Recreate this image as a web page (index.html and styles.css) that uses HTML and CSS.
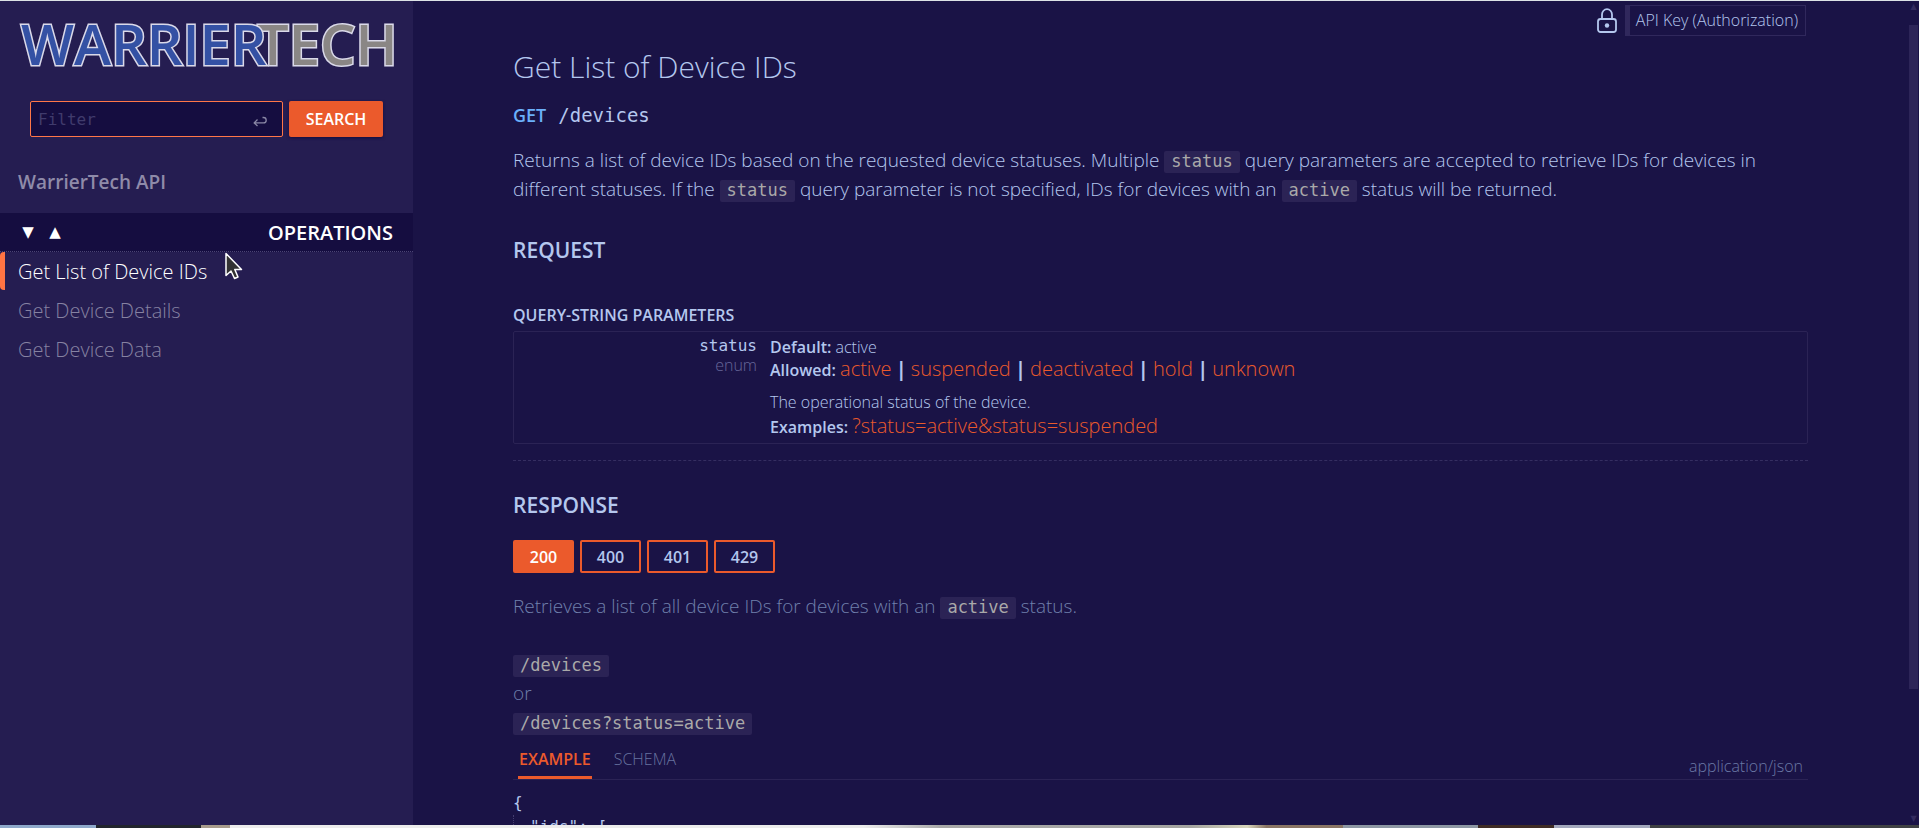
FILE: index.html
```html
<!DOCTYPE html>
<html lang="en">
<head>
<meta charset="utf-8">
<title>WarrierTech API</title>
<link rel="stylesheet" href="styles.css">
</head>
<body>
<div class="app">
  <aside class="sidebar">
    <svg class="logo" viewBox="0 0 378 80" role="img" aria-label="WarrierTech">
      <text class="logo-tech" x="239" y="63">TECH</text>
      <text class="logo-warrier" x="3" y="63">WARRIER</text>
    </svg>
    <form class="search">
      <div class="filter">
        <input class="filter-input" type="text" placeholder="Filter" aria-label="Filter">
        <svg class="filter-enter" viewBox="0 0 14 12" aria-hidden="true">
          <path d="M9.500 2.500h1a2.700 2.700 0 0 1 0 5.400H1.500M4.500 4.500L1.200 7.900L4.500 11" fill="none" stroke="#8a87a5" stroke-width="1.300"/>
        </svg>
      </div>
      <button class="search-button" type="button">SEARCH</button>
    </form>
    <nav class="nav">
      <a class="nav-api" href="#api">WarrierTech API</a>
      <div class="nav-section">
        <div class="nav-toggles">
          <button class="toggle" type="button" aria-label="Expand all">▼</button>
          <button class="toggle" type="button" aria-label="Collapse all">▲</button>
        </div>
        <span>OPERATIONS</span>
      </div>
      <a class="nav-item active" href="#list">Get List of Device IDs</a>
      <a class="nav-item" href="#details">Get Device Details</a>
      <a class="nav-item" href="#data">Get Device Data</a>
    </nav>
    <svg class="cursor" viewBox="0 0 18 28" aria-hidden="true">
      <path d="M1 1.500V23.500L6 19L9.500 26.500L13 25L9.800 17.500H16.500Z" fill="#333" stroke="#fff" stroke-width="1.500" stroke-linejoin="round"/>
    </svg>
  </aside>
  <main class="content">
    <div class="auth">
      <svg class="lock" viewBox="0 0 20 26" aria-hidden="true">
        <path d="M5 11V6.500a5 5.300 0 0 1 10 0V11" fill="none" stroke="#b4c7ee" stroke-width="1.800"/>
        <rect x="1" y="11" width="18" height="13" rx="2.500" fill="none" stroke="#b4c7ee" stroke-width="1.800"/>
        <circle cx="10" cy="17.500" r="2.200" fill="#b4c7ee"/>
      </svg>
      <a class="auth-key" href="#auth">API Key (Authorization)</a>
    </div>
    <h1 class="title">Get List of Device IDs</h1>
    <div class="endpoint"><span class="method">GET</span><span class="path">/devices</span></div>
    <p class="text summary">Returns a list of device IDs based on the requested device statuses. Multiple <code>status</code> query parameters are accepted to retrieve IDs for devices in different statuses. If the <code>status</code> query parameter is not specified, IDs for devices with an <code>active</code> status will be returned.</p>
    <section class="request">
      <h2 class="heading">REQUEST</h2>
      <h3 class="subheading">QUERY-STRING PARAMETERS</h3>
      <div class="params">
        <div class="param-name">
          <div class="name">status</div>
          <div class="type">enum</div>
        </div>
        <div class="param-info">
          <div class="line"><b>Default:</b> active</div>
          <div class="line"><b>Allowed:</b> <a href="#v">active</a> <b class="bar">|</b> <a href="#v">suspended</a> <b class="bar">|</b> <a href="#v">deactivated</a> <b class="bar">|</b> <a href="#v">hold</a> <b class="bar">|</b> <a href="#v">unknown</a></div>
          <div class="line desc">The operational status of the device.</div>
          <div class="line examples"><b>Examples:</b> <a href="#v">?status=active&amp;status=suspended</a></div>
        </div>
      </div>
    </section>
    <section class="response">
      <h2 class="heading">RESPONSE</h2>
      <div class="codes">
        <button class="code-tab selected" type="button">200</button>
        <button class="code-tab" type="button">400</button>
        <button class="code-tab" type="button">401</button>
        <button class="code-tab" type="button">429</button>
      </div>
      <p class="text muted retrieves">Retrieves a list of all device IDs for devices with an <code>active</code> status.</p>
      <p class="text muted"><code>/devices</code><br>or<br><code>/devices?status=active</code></p>
      <div class="tabs">
        <button class="tab selected" type="button">EXAMPLE</button>
        <button class="tab" type="button">SCHEMA</button>
        <span class="mime">application/json</span>
      </div>
      <div class="json">
        <div>{</div>
        <div class="json-body">"ids": [</div>
      </div>
    </section>
  </main>
  <div class="scroll" aria-hidden="true"><span class="arrow">▲</span><div class="thumb"></div><span class="arrow">▼</span></div>
</div>
</body>
</html>
```
FILE: styles.css
```css
* { box-sizing: border-box; }
body {
  margin: 0;
  height: 100vh;
  display: flex;
  flex-direction: column;
  overflow: hidden;
  font-family: "Open Sans", "Noto Sans", sans-serif;
  font-weight: 300;
  color: #b4c7ee;
  background: #1a1346;
}
body::before { content: ""; flex: 0 0 1px; background: #dde3e6; }
body::after {
  content: "";
  flex: 0 0 3px;
  background: linear-gradient(90deg, #8fa9cb 0 5%, #22252d 5% 10.500%, #a89c8c 10.500% 12%, #ececec 12% 45%, #a9a9a9 49%, #a4a4a0 62%, #d8d5bb 65%, #8a7564 66% 70%, #8d97a3 70% 77%, #3f2c25 77% 81%, #a3a8bd 81% 86%, #3f4143 86%);
}
h1, h2, h3, p { margin: 0; }
button, input { font-family: inherit; }
a { text-decoration: none; color: inherit; }
.app { flex: 1; min-height: 0; display: flex; }

.sidebar { position: relative; flex: 0 0 413px; background: #251d51; }
.logo { display: block; width: 378px; height: 80px; margin: 1px 0 0 18px; }
.logo text {
  font-size: 56px;
  font-weight: 600;
  stroke: #dad9e9;
  stroke-width: 3px;
  paint-order: stroke;
}
.logo-warrier { fill: #3451a4; }
.logo-tech { fill: #8a8685; }
.search { display: flex; gap: 6px; margin: 19px 30px 0; }
.filter { position: relative; flex: 1; }
.filter-input {
  width: 100%;
  height: 36px;
  padding: 0 36px 0 7px;
  border: 1px solid #ff7648;
  border-radius: 2px;
  background: #150d40;
  color: #fff;
  font: 16px "DejaVu Sans Mono", monospace;
}
.filter-input::placeholder { color: #403b6c; opacity: 1; }
.filter-enter { position: absolute; right: 16px; top: 14px; width: 14px; height: 12px; }
.search-button {
  width: 94px;
  height: 36px;
  padding: 0;
  border: 0;
  border-radius: 2px;
  background: #eb5a2c;
  color: #fff;
  font-size: 16px;
  font-weight: 600;
  box-shadow: 0 1px 3px #150d40;
}
.nav { margin-top: 32px; }
.nav a { display: block; padding-left: 18px; }
.nav .nav-api { height: 44px; font-size: 19px; line-height: 27px; font-weight: 600; color: #8f8ba9; }
.nav-section {
  display: flex;
  justify-content: space-between;
  align-items: center;
  height: 39px;
  padding: 0 20px;
  background: #150d40;
  border-bottom: 1px dotted #4b4574;
  color: #fff;
  font-size: 20px;
  font-weight: 600;
}
.nav-toggles { display: flex; gap: 11px; }
.toggle { width: 16px; padding: 0; border: 0; background: none; color: #fff; font: 15px "DejaVu Sans", sans-serif; }
.nav-item { height: 39px; font-size: 20px; line-height: 39px; color: #8682a2; }
.nav .nav-item.active { position: relative; color: #fff; }
.nav-item.active::before { content: ""; position: absolute; left: 0; top: 0; width: 5px; height: 38px; background: #ff7443; border-radius: 4px 0 0 4px; }
.cursor { position: absolute; left: 225px; top: 251px; width: 18px; height: 28px; }

.content { flex: 1; min-width: 0; padding: 4px 101px 0 100px; overflow: hidden; }
.auth { display: flex; justify-content: flex-end; gap: 8px; align-items: center; padding-right: 2px; }
.lock { width: 20px; height: 26px; }
.auth-key { padding: 0 7px 0 6px; border: 1px solid #30285c; border-left-width: 5px; font-size: 16px; line-height: 29px; }
.title { margin-top: 9px; font-size: 30px; line-height: 44px; font-weight: 300; }
.endpoint { display: flex; gap: 12px; align-items: baseline; margin-top: 12px; font-size: 18px; line-height: 28px; }
.method { font-weight: 600; color: #6bb0fb; }
.path { font-family: "DejaVu Sans Mono", monospace; font-size: 19px; }
.text { font-size: 19px; line-height: 29px; }
.summary { margin-top: 17px; }
.muted { color: #7080ac; }
code {
  display: inline-block;
  padding: 0 7px 2px;
  border-radius: 2px;
  background: #2b2355;
  color: #aaa9a9;
  font: 17px/20px "DejaVu Sans Mono", monospace;
}
.heading { font-size: 21px; line-height: 30px; font-weight: 600; }
.request { margin-top: 31px; padding-bottom: 16px; border-bottom: 1px dashed #352e61; }
.subheading { margin-top: 38px; font-size: 16px; line-height: 24px; font-weight: 600; }
.params { display: flex; margin-top: 4px; border: 1px solid #2b2355; border-radius: 2px; padding: 4px 0; }
.param-name { flex: 0 0 243px; text-align: right; }
.name { font: 16px/20px "DejaVu Sans Mono", monospace; }
.type { font-size: 16px; line-height: 18px; color: #67679a; }
.param-info { padding-left: 13px; font-size: 16px; }
.line { line-height: 23px; }
.line b { font-weight: 600; }
.line a, .line .bar { font-size: 20px; line-height: 20px; }
.line a { color: #eb5a2c; }
.line .bar { font-weight: 700; }
.desc { margin-top: 9px; }
.examples { margin-top: 2px; }
.response { margin-top: 29px; }
.codes { display: flex; gap: 6px; margin-top: 20px; }
.code-tab {
  width: 61px;
  height: 33px;
  padding: 0;
  border: 2px solid #eb5a2c;
  border-radius: 2px;
  background: transparent;
  color: #b4c7ee;
  font-size: 16px;
  font-weight: 600;
}
.code-tab.selected { background: #eb5a2c; color: #fff; }
.retrieves { margin: 19px 0 29px; }
.tabs { display: flex; align-items: flex-end; border-bottom: 1px solid #2b2355; padding-left: 5px; }
.tab { padding: 11px 1px 6px; margin-right: 21px; border: 0; border-bottom: 3px solid transparent; background: none; color: #67729f; font-size: 16px; line-height: 22px; font-weight: 300; }
.tab.selected { color: #eb5a2c; border-color: #eb5a2c; font-weight: 600; }
.mime { margin: 0 5px 1px auto; font-size: 16px; line-height: 24px; color: #6a78a5; }
.json { padding-top: 11px; font: 16px/24px "DejaVu Sans Mono", monospace; }
.json-body { padding-left: 16px; border-left: 1px dotted #443d70; }

.scroll { flex: 0 0 10px; display: flex; flex-direction: column; align-items: center; justify-content: space-between; padding: 2px 1px 2px 0; }
.arrow { font: 8px/8px "DejaVu Sans", sans-serif; color: #332b5f; }
.thumb { width: 9px; height: 81%; margin: 14px 0 auto; background: #2d2558; }
```
